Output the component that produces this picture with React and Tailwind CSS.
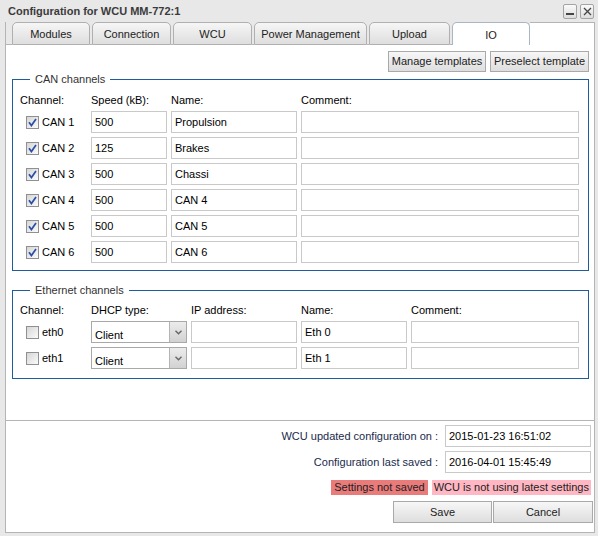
import React from "react";

const canRows = [
  { ch: "CAN 1", speed: "500", name: "Propulsion" },
  { ch: "CAN 2", speed: "125", name: "Brakes" },
  { ch: "CAN 3", speed: "500", name: "Chassi" },
  { ch: "CAN 4", speed: "500", name: "CAN 4" },
  { ch: "CAN 5", speed: "500", name: "CAN 5" },
  { ch: "CAN 6", speed: "500", name: "CAN 6" },
];

const ethRows = [
  { ch: "eth0", dhcp: "Client", name: "Eth 0" },
  { ch: "eth1", dhcp: "Client", name: "Eth 1" },
];

const tabs = [
  { label: "Modules", w: "w-[78px]" },
  { label: "Connection", w: "w-[79px]" },
  { label: "WCU", w: "w-[79px]" },
  { label: "Power Management", w: "w-[113px]" },
  { label: "Upload", w: "w-[81px]" },
];

const Checkbox = ({ checked }) => (
  <span className="w-[13px] h-[13px] shrink-0 border border-[#8f9090] bg-linear-to-br from-[#d6d6d6] to-[#fbfbfb] flex items-center justify-center">
    {checked && (
      <svg width="9" height="9" viewBox="0 0 9 9">
        <path d="M1 4.3 L3.4 7.6 L8 1" stroke="#2b4ea6" strokeWidth="1.7" fill="none" />
      </svg>
    )}
  </span>
);

const Field = ({ value, className = "" }) => (
  <div className={`h-[22px] border border-[#c9c9c9] bg-white pl-[3px] flex items-center text-black ${className}`}>
    {value}
  </div>
);

const Legend = ({ children }) => (
  <legend className="ml-[10px] px-[5px] leading-[14px] text-[#333]">{children}</legend>
);

const Btn = ({ children, className = "" }) => (
  <button className={`h-[21px] border border-[#a9a9a9] bg-linear-to-b from-[#f7f7f7] to-[#dedede] text-[#222] flex items-center justify-center whitespace-nowrap ${className}`}>
    {children}
  </button>
);

const App = () => {
  return (
    <div className="w-[598px] h-[536px] bg-[#e8e8e8] pl-[5px] pr-[3px] flex flex-col text-[11px] text-black font-['Liberation_Sans',Arial,sans-serif] overflow-hidden">
      {/* Title bar */}
      <div className="h-[22px] flex items-center justify-between pl-[3px] pr-[1px]">
        <span className="font-bold text-[#3b3b3b] text-[11px]">Configuration for WCU MM-772:1</span>
        <div className="flex gap-[3px]">
          <span className="w-[14px] h-[15px] border border-[#a4a4a4] rounded-[2px] bg-linear-to-b from-[#fafafa] to-[#dcdcdc] flex items-end justify-center pb-[3px]">
            <span className="w-[8px] h-[2px] bg-[#444]" />
          </span>
          <span className="w-[14px] h-[15px] border border-[#a4a4a4] rounded-[2px] bg-linear-to-b from-[#fafafa] to-[#dcdcdc] flex items-center justify-center">
            <svg width="9" height="9" viewBox="0 0 9 9">
              <path d="M1 1 L8 8 M8 1 L1 8" stroke="#444" strokeWidth="1.3" />
            </svg>
          </span>
        </div>
      </div>

      {/* Tabs */}
      <div className="h-[23px] flex">
        <div className="w-[7px] border-l border-b border-[#b4b4b4]" />
        {tabs.map((t) => (
          <div key={t.label} className="flex">
            <div className={`${t.w} h-full pt-[2px] rounded-t-[5px] border border-[#b0b0b0] bg-linear-to-b from-[#f6f6f6] to-[#dedede] flex items-center justify-center text-[#222]`}>
              {t.label}
            </div>
            <div className="w-[2px] border-b border-[#b4b4b4]" />
          </div>
        ))}
        <div className="w-[78px] h-full pt-[2px] rounded-t-[5px] border border-b-0 border-[#a9b6c4] bg-white flex items-center justify-center text-[#222]">
          IO
        </div>
        <div className="flex-1 border-t border-r border-[#b4b4b4] bg-white" />
      </div>

      {/* IO panel */}
      <div className="h-[376px] bg-white border-l border-r border-b border-[#b4b4b4] pl-[6px] pr-[5px] pt-[6px]">
        <div className="flex justify-end gap-[4px]">
          <Btn className="w-[98px]">Manage templates</Btn>
          <Btn className="w-[99px]">Preselect template</Btn>
        </div>

        <fieldset className="border border-[#1f5c9c] w-[577px] pl-[7px] pb-[7px]">
          <Legend>CAN channels</Legend>
          <div className="grid grid-cols-[67px_76px_126px_278px] gap-x-[4px] gap-y-[4px] pt-[7px]">
            <div className="h-[14px] leading-[14px] mb-[-1px]">Channel:</div>
            <div className="h-[14px] leading-[14px]">Speed (kB):</div>
            <div className="h-[14px] leading-[14px]">Name:</div>
            <div className="h-[14px] leading-[14px]">Comment:</div>
            {canRows.map((r) => (
              <React.Fragment key={r.ch}>
                <div className="h-[22px] flex items-center gap-[3px] pl-[6px]">
                  <Checkbox checked />
                  <span>{r.ch}</span>
                </div>
                <Field value={r.speed} />
                <Field value={r.name} />
                <Field value="" />
              </React.Fragment>
            ))}
          </div>
        </fieldset>

        <fieldset className="border border-[#1f5c9c] w-[577px] pl-[7px] pb-[9px] mt-[12px]">
          <Legend>Ethernet channels</Legend>
          <div className="grid grid-cols-[67px_96px_106px_106px_168px] gap-x-[4px] gap-y-[4px] pt-[6px]">
            <div className="h-[14px] leading-[14px] mb-[-3px]">Channel:</div>
            <div className="h-[14px] leading-[14px]">DHCP type:</div>
            <div className="h-[14px] leading-[14px]">IP address:</div>
            <div className="h-[14px] leading-[14px]">Name:</div>
            <div className="h-[14px] leading-[14px]">Comment:</div>
            {ethRows.map((r) => (
              <React.Fragment key={r.ch}>
                <div className="h-[22px] flex items-center gap-[3px] pl-[6px]">
                  <Checkbox checked={false} />
                  <span>{r.ch}</span>
                </div>
                <div className="h-[22px] border border-[#a9a9a9] bg-white flex">
                  <div className="flex-1 pl-[3px] pt-[6px] leading-[14px]">{r.dhcp}</div>
                  <div className="w-[17px] border-l border-[#b4b4b4] bg-linear-to-b from-[#ececec] to-[#d2d2d2] flex items-center justify-center">
                    <svg width="7" height="5" viewBox="0 0 7 5">
                      <path d="M0.5 0.8 L3.5 3.8 L6.5 0.8" stroke="#666" strokeWidth="1.4" fill="none" />
                    </svg>
                  </div>
                </div>
                <Field value="" />
                <Field value={r.name} />
                <Field value="" />
              </React.Fragment>
            ))}
          </div>
        </fieldset>
      </div>

      {/* Status / actions */}
      <div className="h-[112px] bg-white border-l border-r border-b border-[#b4b4b4] flex flex-col items-end pt-[4px] text-[#1a2a4c]">
        <div className="flex items-center gap-[7px] pr-[3px]">
          <span>WCU updated configuration on :</span>
          <Field value="2015-01-23 16:51:02" className="w-[146px]" />
        </div>
        <div className="flex items-center gap-[7px] pr-[3px] mt-[4px]">
          <span>Configuration last saved :</span>
          <Field value="2016-04-01 15:45:49" className="w-[146px]" />
        </div>
        <div className="flex gap-[4px] pr-[3px] mt-[7px] text-[#222]">
          <span className="h-[15px] leading-[15px] px-[3px] bg-[#e97b7b]">Settings not saved</span>
          <span className="h-[15px] leading-[15px] px-[2px] bg-[#ffb7c3]">WCU is not using latest settings</span>
        </div>
        <div className="flex gap-[1px] mt-[6px] mr-[1px]">
          <Btn className="w-[99px] h-[22px]">Save</Btn>
          <Btn className="w-[100px] h-[22px]">Cancel</Btn>
        </div>
      </div>
    </div>
  );
};

export default App;
